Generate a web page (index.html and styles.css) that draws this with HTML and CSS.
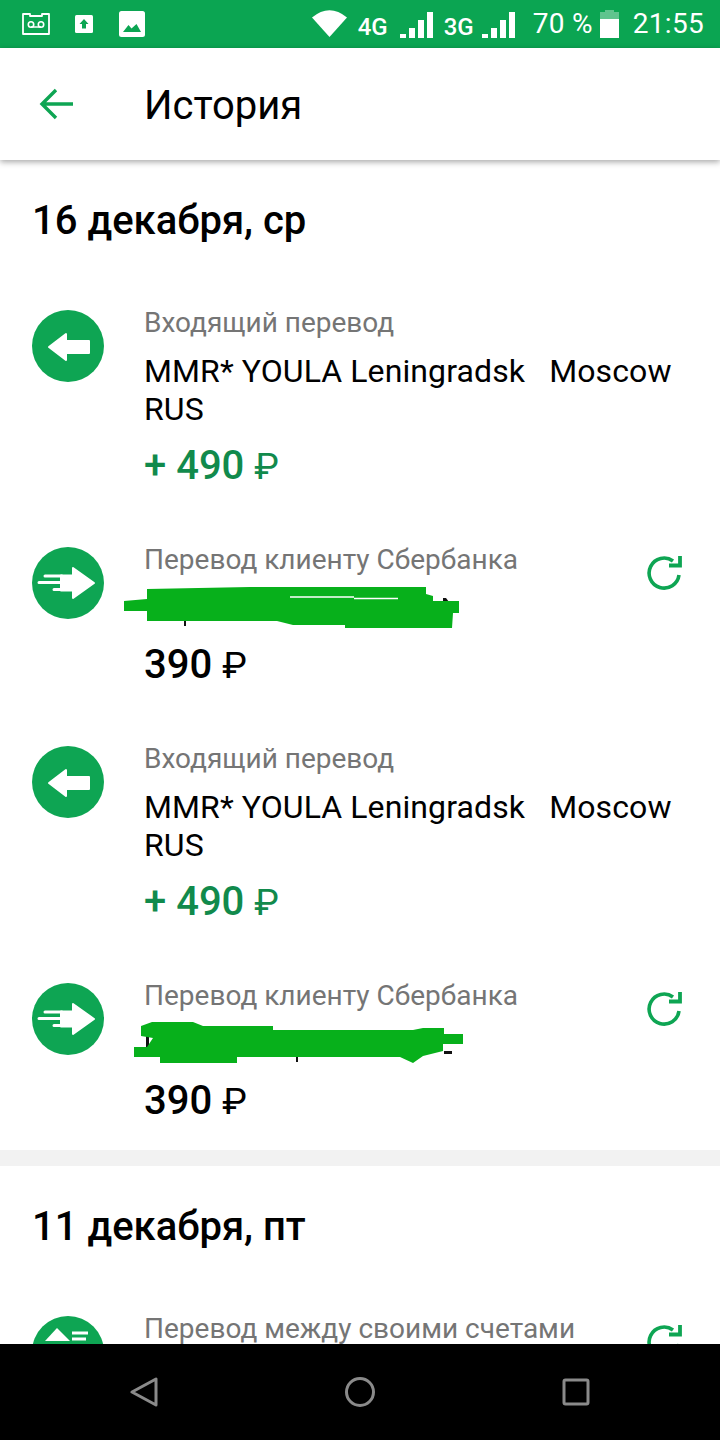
FILE: index.html
```html
<!DOCTYPE html>
<html lang="ru">
<head>
<meta charset="UTF-8">
<link rel="stylesheet" href="styles.css">
<title>История</title>
</head>
<body>

<svg class="defs" width="0" height="0">
  <symbol id="in" viewBox="0 0 72 72">
    <circle cx="36" cy="36" r="36" fill="#0ea553"/>
    <path d="M17 37 34 24V31H57V43H34V50Z" fill="#fff" stroke="#fff" stroke-width="2" stroke-linejoin="round"/>
  </symbol>
  <symbol id="out" viewBox="0 0 72 72">
    <circle cx="36" cy="36" r="36" fill="#0ea553"/>
    <path d="M41 21 62 36 41 51V43.500H29V28.500H41Z" fill="#fff" stroke="#fff" stroke-width="2" stroke-linejoin="round"/>
    <path d="M13 29H30M7 35.500H30M22 42.500H30" stroke="#fff" stroke-width="3" stroke-linecap="round"/>
  </symbol>
  <symbol id="repeat" viewBox="0 0 36 36">
    <path d="M33 21A15 15 0 1 1 27 7" fill="none" stroke="#0ea553" stroke-width="3.600"/>
    <path d="M34 2V11.500H23" fill="none" stroke="#0ea553" stroke-width="3.800"/>
  </symbol>
  <symbol id="bars" viewBox="0 0 33 26">
    <path d="M0 22H6V26H0ZM9 16H15V26H9ZM18 8H24V26H18ZM27 0H33V26H27Z" fill="#fff"/>
  </symbol>
</svg>

<div class="phone">
  <div class="status">
    <svg class="ic-tape" viewBox="0 0 28 22"><path d="M1 1H8V3H20V1H27V21H1Z" fill="none" stroke="#fff" stroke-width="1.800" stroke-linejoin="round"/><path d="M9 14H19" stroke="#fff" stroke-width="1.500"/><circle cx="9" cy="11.500" r="2.700" fill="none" stroke="#fff" stroke-width="1.600"/><circle cx="19" cy="11.500" r="2.700" fill="none" stroke="#fff" stroke-width="1.600"/></svg>
    <svg class="ic-up" viewBox="0 0 18 18"><rect width="18" height="18" rx="1.500" fill="#fff"/><path d="M9 4 13.500 9H11V13.500H7V9H4.500Z" fill="#0ba552"/></svg>
    <svg class="ic-pic" viewBox="0 0 26 26"><rect width="26" height="26" rx="2.500" fill="#fff"/><path d="M4 21 9.500 14 12.500 17.500 17.500 13 22 21Z" fill="#0ba552"/></svg>
    <span class="grow"></span>
    <svg class="ic-wifi" viewBox="0 0 35 27"><path d="M0 7.500Q17.500-7 35 7.500L17.500 27Z" fill="#fff"/></svg>
    <span class="net net-a">4G</span>
    <svg class="ic-bars"><use href="#bars"/></svg>
    <span class="net net-b">3G</span>
    <svg class="ic-bars"><use href="#bars"/></svg>
    <span class="clock batt-text">70 %</span>
    <svg class="ic-batt" viewBox="0 0 19 28"><path d="M5 0H14V2H19V9H0V2H5Z" fill="#fff" opacity=".35"/><rect y="9" width="19" height="19" fill="#fff"/></svg>
    <span class="clock time">21:55</span>
  </div>

  <header class="appbar">
    <svg class="back" viewBox="0 0 34 32"><path d="M34 16H3M17 2 3 16 17 30" fill="none" stroke="#0ea553" stroke-width="3.400"/></svg>
    <h1>История</h1>
  </header>

  <main class="content">
    <section class="day">
      <h2>16 декабря, ср</h2>
      <div class="row">
        <svg class="op"><use href="#in"/></svg>
        <div class="info">
          <p class="label">Входящий перевод</p>
          <p class="name">MMR* YOULA Leningradsk   Moscow RUS</p>
          <p class="sum plus">+ 490 <span class="rub">₽</span></p>
        </div>
      </div>
      <div class="row">
        <svg class="op"><use href="#out"/></svg>
        <div class="info">
          <div class="head">
            <p class="label">Перевод клиенту Сбербанка</p>
            <svg class="again"><use href="#repeat"/></svg>
          </div>
          <div class="name hidden-name">
            <svg class="scribble" viewBox="0 580 720 50">
              <path d="M443 597h3l3 4h-6zM184 619h2v6h-2z" fill="#111"/>
              <path d="M147 588 250 586H426V593L433 595V600H459V612H453L452 627H345V624H293L277 620H147V610H124V600L147 598Z" fill="#07b01b"/>
              <path d="M290 596H354M354 597.500H398" stroke="#fff" stroke-width="1.500"/>
            </svg>
          </div>
          <p class="sum">390 <span class="rub">₽</span></p>
        </div>
      </div>
      <div class="row">
        <svg class="op"><use href="#in"/></svg>
        <div class="info">
          <p class="label">Входящий перевод</p>
          <p class="name">MMR* YOULA Leningradsk   Moscow RUS</p>
          <p class="sum plus">+ 490 <span class="rub">₽</span></p>
        </div>
      </div>
      <div class="row">
        <svg class="op"><use href="#out"/></svg>
        <div class="info">
          <div class="head">
            <p class="label">Перевод клиенту Сбербанка</p>
            <svg class="again"><use href="#repeat"/></svg>
          </div>
          <div class="name hidden-name">
            <svg class="scribble" viewBox="0 1016 720 50">
              <path d="M146 1035h3v11h-3zM296 1055h2v6h-2zM444 1050h8v3h-8z" fill="#111"/>
              <path d="M141 1025 152 1021H193L203 1025H273V1029H413L423 1027H444V1033H463V1043H443V1050L423 1055 413 1062 400 1056H237V1062H160V1056H134V1046H147L153 1037 141 1035Z" fill="#07b01b"/>
            </svg>
          </div>
          <p class="sum">390 <span class="rub">₽</span></p>
        </div>
      </div>
    </section>

    <section class="day">
      <h2>11 декабря, пт</h2>
      <div class="row">
        <svg class="op" viewBox="0 0 72 72">
          <circle cx="36" cy="36" r="36" fill="#0ea553"/>
          <path d="M25 12 38 25H13Z" fill="#fff"/>
          <path d="M40 17H56M40 23H54" stroke="#fff" stroke-width="3"/>
        </svg>
        <div class="info">
          <div class="head">
            <p class="label">Перевод между своими счетами</p>
            <svg class="again"><use href="#repeat"/></svg>
          </div>
        </div>
      </div>
    </section>
  </main>

  <nav class="navbar">
    <svg viewBox="0 0 28 30"><path d="M26 2V28L2 15Z" fill="none" stroke="#8a8a8a" stroke-width="3" stroke-linejoin="round"/></svg>
    <svg viewBox="0 0 30 30"><circle cx="15" cy="15" r="13.500" fill="none" stroke="#8a8a8a" stroke-width="3"/></svg>
    <svg viewBox="0 0 30 30"><rect x="3" y="3" width="24" height="24" rx="1.500" fill="none" stroke="#8a8a8a" stroke-width="3"/></svg>
  </nav>
</div>

</body>
</html>
```
FILE: styles.css
```css
html, body {margin: 0; padding: 0; overflow: hidden;}
body {font-family: Roboto, "Noto Sans", sans-serif; background: #fff; color: #000;}
p, h1, h2 {margin: 0; padding: 0; font-weight: normal;}
.defs {display: block; position: absolute;}

.phone {display: flex; flex-direction: column; width: 720px; height: 1440px; overflow: hidden;}

/* status bar */
.status {flex: none; display: flex; align-items: center; height: 48px; padding: 0 16px 0 22px;
  background: #0ba552; color: #fff;}
.status svg {flex: none; display: block;}
.grow {flex: 1;}
.ic-tape {width: 28px; height: 22px; margin: 0 25px 0 0;}
.ic-up {width: 18px; height: 18px; margin-right: 26px;}
.ic-pic {width: 26px; height: 26px;}
.ic-wifi {width: 35px; height: 27px; margin: -1px 11px 0 0;}
.net {font-size: 24px; font-weight: 500; margin-top: 6px; width: 29px;}
.status .ic-bars {width: 33px; height: 26px; margin-top: 2px;}
.net-a {margin-right: 13px;}
.net-b {margin: 6px 9px 0 11px;}
.clock {font-size: 28px; line-height: 48px; letter-spacing: .3px;}
.batt-text {margin-left: 18px; margin-right: 7px;}
.ic-batt {width: 19px; height: 28px; margin-right: 14px;}

/* app bar */
.appbar {flex: none; position: relative; z-index: 1; display: flex; align-items: center;
  height: 112px; padding-left: 39px; box-shadow: 0 2px 6px rgba(0, 0, 0, .35);}
.back {width: 34px; height: 32px; margin-right: 71px; margin-top: -1px;}
.appbar h1 {font-size: 40px; line-height: 112px; margin-top: 3px;}

/* list */
.content {flex: 1; min-height: 0; overflow: hidden;}
.day {padding: 39px 0 21px; border-bottom: 16px solid #f2f2f2;}
.day h2 {margin: 0 0 61px 32px; font-size: 40px; font-weight: 500; line-height: 44px;}
.row {display: flex; padding-left: 32px; margin-bottom: 47px;}
.row:last-child {margin-bottom: 0;}
.op {flex: none; width: 72px; height: 72px; margin: 6px 40px 0 0;}
.info {flex: 1; min-width: 0; padding-right: 38px;}
.head {display: flex; justify-content: space-between; align-items: flex-start;}
.label {font-size: 28px; line-height: 38px; color: #757575;}
.again {flex: none; width: 36px; height: 36px; margin: 13px 0 -11px;}
.name {margin-top: 10px; font-size: 32px; line-height: 38px; white-space: pre-wrap; letter-spacing: .1px;}
.hidden-name {position: relative; height: 38px;}
.scribble {position: absolute; left: -144px; top: -8px; width: 720px; height: 50px;}
.sum {margin-top: 10px; font-size: 40px; font-weight: 500; line-height: 56px;}
.rub {font-weight: 400; font-size: 37px; line-height: 1;}
.plus {color: #118a4c;}

/* android nav */
.navbar {flex: none; display: flex; justify-content: center; align-items: center; gap: 186px;
  height: 96px; background: #000;}
.navbar svg {width: 30px; height: 30px;}
```
